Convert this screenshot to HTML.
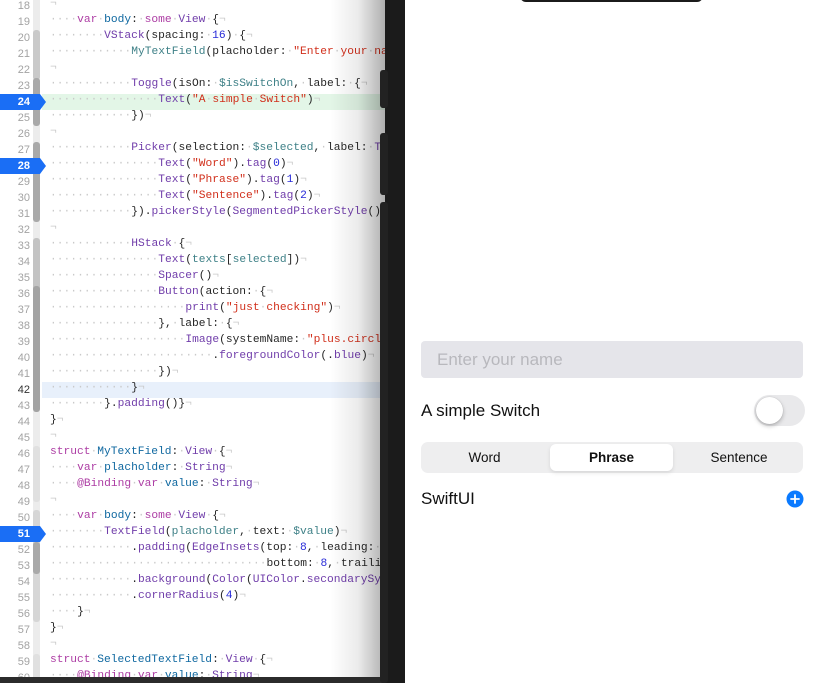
<!DOCTYPE html>
<html><head><meta charset="utf-8">
<style>
html,body{margin:0;padding:0;width:818px;height:683px;overflow:hidden;background:#fff;}
#ed{position:absolute;left:0;top:0;width:386px;height:683px;overflow:hidden;background:#fff;}
.ln{position:absolute;left:0;width:30px;text-align:right;font:11px "Liberation Sans",sans-serif;color:#a3a3a3;height:16px;line-height:16px;}
.code{position:absolute;left:50px;height:16px;line-height:16px;font:11.25px "Liberation Mono",monospace;color:#262626;white-space:pre;}
i{font-style:normal;color:#c9c9c9;}
.k{color:#ad3da4;}.t{color:#703daa;}.s{color:#d12f1b;}.n{color:#272ad8;}.v{color:#3e8087;}.b{color:#0f68a0;}
.hl{position:absolute;left:42px;width:344px;height:16px;}
.bar{position:absolute;left:33px;width:7px;border-radius:3px;}
.bp{position:absolute;left:0;width:40px;height:16px;background:#1a6ef5;}
.bp:after{content:"";position:absolute;left:40px;top:0;border-left:6px solid #1a6ef5;border-top:8px solid transparent;border-bottom:8px solid transparent;}
.bpn{position:absolute;left:0;width:30px;text-align:right;font:bold 11px "Liberation Sans",sans-serif;color:#fff;height:16px;line-height:16px;}
#shade{position:absolute;left:330px;top:0;width:56px;height:683px;background:linear-gradient(to right,rgba(0,0,0,0),rgba(0,0,0,0.08) 50%,rgba(0,0,0,0.32));}
#bot{position:absolute;left:0;top:677px;width:386px;height:6px;background:#2b2b2b;}
#frame{position:absolute;left:385px;top:0;width:20px;height:683px;background:#1b1b1b;}
.btn{position:absolute;left:380px;width:8px;background:#222;border-radius:3px;}
#scr{position:absolute;left:405px;top:0;width:413px;height:683px;background:#fff;font-family:"Liberation Sans",sans-serif;}
</style></head><body>
<div id="ed">
<div class="hl" style="top:94px;background:#e3f6e7"></div>
<div class="hl" style="top:382px;background:#e8f0fb"></div>
<div class="bar" style="top:0;height:683px;background:#ececec;border-radius:0"></div>
<div class="bar" style="top:30px;height:50px;background:#c9c9c9"></div>
<div class="bar" style="top:78px;height:48px;background:#a9a9a9"></div>
<div class="bar" style="top:142px;height:80px;background:#a9a9a9"></div>
<div class="bar" style="top:238px;height:64px;background:#c3c3c3"></div>
<div class="bar" style="top:286px;height:126px;background:#a3a3a3"></div>
<div class="bar" style="top:446px;height:56px;background:#e0e0e0"></div>
<div class="bar" style="top:510px;height:112px;background:#d6d6d6"></div>
<div class="bar" style="top:542px;height:32px;background:#a9a9a9"></div>
<div class="bar" style="top:654px;height:29px;background:#e0e0e0"></div>
<div id="lines"></div>
<div id="shade"></div>
<div id="bot"></div>
</div>
<div id="frame"></div>
<div class="btn" style="top:70px;height:38px"></div>
<div class="btn" style="top:133px;height:62px"></div>
<div class="btn" style="top:202px;height:481px"></div>
<div id="scr">
<div style="position:absolute;left:115px;top:-6px;width:183px;height:8px;background:#1b1b1b;border-radius:0 0 6px 6px"></div>
<div style="position:absolute;left:16px;top:341px;width:382px;height:37px;background:#e5e5ea;border-radius:4px"></div>
<div style="position:absolute;left:32px;top:349px;font-size:17px;color:#b8b8bd;line-height:21px">Enter your name</div>
<div style="position:absolute;left:16px;top:400px;font-size:17px;color:#111;line-height:21px">A simple Switch</div>
<div style="position:absolute;left:349px;top:395px;width:51px;height:31px;background:#e9e9eb;border-radius:16px"></div>
<div style="position:absolute;left:351px;top:397px;width:27px;height:27px;background:#fff;border-radius:50%;box-shadow:0 2px 4px rgba(0,0,0,0.25),0 0 1px rgba(0,0,0,0.2)"></div>
<div style="position:absolute;left:16px;top:442px;width:382px;height:31px;background:#eeeeef;border-radius:7px"></div>
<div style="position:absolute;left:145px;top:444px;width:123px;height:27px;background:#fff;border-radius:6px;box-shadow:0 2px 4px rgba(0,0,0,0.1)"></div>
<div style="position:absolute;left:16px;top:449px;width:127px;text-align:center;font-size:13.5px;line-height:17px;color:#111">Word</div>
<div style="position:absolute;left:145px;top:449px;width:123px;text-align:center;font-size:13.5px;line-height:17px;color:#111;font-weight:bold">Phrase</div>
<div style="position:absolute;left:270px;top:449px;width:128px;text-align:center;font-size:13.5px;line-height:17px;color:#111">Sentence</div>
<div style="position:absolute;left:16px;top:488px;font-size:17px;color:#111;line-height:21px">SwiftUI</div>
<svg style="position:absolute;left:381px;top:490px" width="18" height="18" viewBox="0 0 18 18"><circle cx="9" cy="9" r="8.5" fill="#0a7aff"/><path d="M9 5v8M5 9h8" stroke="#fff" stroke-width="1.8" stroke-linecap="round"/></svg>
</div>
<script>
var L={
18:'¬',
19:'····<span class="k">var</span>·<span class="b">body</span>:·<span class="k">some</span>·<span class="t">View</span>·{¬',
20:'········<span class="t">VStack</span>(spacing:·<span class="n">16</span>)·{¬',
21:'············<span class="v">MyTextField</span>(placholder:·<span class="s">"Enter·your·name"</span>,·value:·$name)¬',
22:'¬',
23:'············<span class="t">Toggle</span>(isOn:·<span class="v">$isSwitchOn</span>,·label:·{¬',
24:'················<span class="t">Text</span>(<span class="s">"A·simple·Switch"</span>)¬',
25:'············})¬',
26:'¬',
27:'············<span class="t">Picker</span>(selection:·<span class="v">$selected</span>,·label:·<span class="t">Text</span>("")¬',
28:'················<span class="t">Text</span>(<span class="s">"Word"</span>).<span class="t">tag</span>(<span class="n">0</span>)¬',
29:'················<span class="t">Text</span>(<span class="s">"Phrase"</span>).<span class="t">tag</span>(<span class="n">1</span>)¬',
30:'················<span class="t">Text</span>(<span class="s">"Sentence"</span>).<span class="t">tag</span>(<span class="n">2</span>)¬',
31:'············}).<span class="t">pickerStyle</span>(<span class="t">SegmentedPickerStyle</span>())¬',
32:'¬',
33:'············<span class="t">HStack</span>·{¬',
34:'················<span class="t">Text</span>(<span class="v">texts</span>[<span class="v">selected</span>])¬',
35:'················<span class="t">Spacer</span>()¬',
36:'················<span class="t">Button</span>(action:·{¬',
37:'····················<span class="t">print</span>(<span class="s">"just·checking"</span>)¬',
38:'················},·label:·{¬',
39:'····················<span class="t">Image</span>(systemName:·<span class="s">"plus.circle.fill"</span>)¬',
40:'························.<span class="t">foregroundColor</span>(.<span class="t">blue</span>)¬',
41:'················})¬',
42:'············}¬',
43:'········}.<span class="t">padding</span>()}¬',
44:'}¬',
45:'¬',
46:'<span class="k">struct</span>·<span class="b">MyTextField</span>:·<span class="t">View</span>·{¬',
47:'····<span class="k">var</span>·<span class="b">placholder</span>:·<span class="t">String</span>¬',
48:'····<span class="k">@Binding</span>·<span class="k">var</span>·<span class="b">value</span>:·<span class="t">String</span>¬',
49:'¬',
50:'····<span class="k">var</span>·<span class="b">body</span>:·<span class="k">some</span>·<span class="t">View</span>·{¬',
51:'········<span class="t">TextField</span>(<span class="v">placholder</span>,·text:·<span class="v">$value</span>)¬',
52:'············.<span class="t">padding</span>(<span class="t">EdgeInsets</span>(top:·<span class="n">8</span>,·leading:·<span class="n">16</span>,¬',
53:'································bottom:·<span class="n">8</span>,·trailing:·<span class="n">16</span>))¬',
54:'············.<span class="t">background</span>(<span class="t">Color</span>(<span class="t">UIColor</span>.<span class="t">secondarySystemBackground</span>))¬',
55:'············.<span class="t">cornerRadius</span>(<span class="n">4</span>)¬',
56:'····}¬',
57:'}¬',
58:'¬',
59:'<span class="k">struct</span>·<span class="b">SelectedTextField</span>:·<span class="t">View</span>·{¬',
60:'····<span class="k">@Binding</span>·<span class="k">var</span>·<span class="b">value</span>:·<span class="t">String</span>¬'
};
var bps={24:1,28:1,51:1},h='';
for(var n=18;n<=60;n++){var y=-2+(n-18)*16;
 if(bps[n]) h+='<div class="bp" style="top:'+y+'px"></div><div class="bpn" style="top:'+y+'px">'+n+'</div>';
 else h+='<div class="ln" style="top:'+y+'px;'+(n==42?'color:#333;':'')+'">'+n+'</div>';
 h+='<div class="code" style="top:'+y+'px">'+L[n].replace(/·/g,'<i>·</i>').replace(/¬/g,'<i>¬</i>')+'</div>';}
document.getElementById('lines').innerHTML=h;
</script>
</body></html>
